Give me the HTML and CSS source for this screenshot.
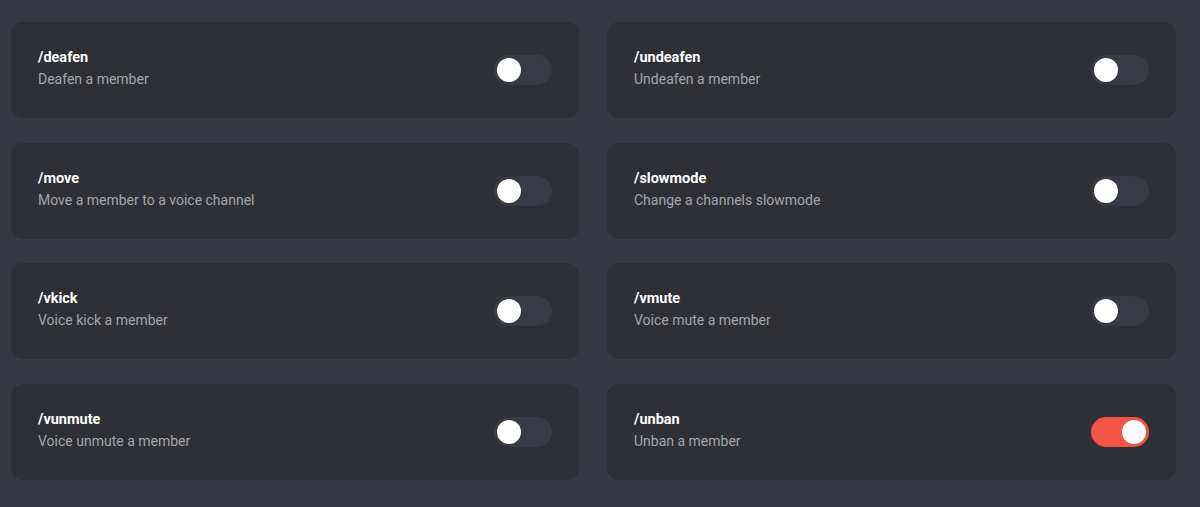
FILE: index.html
```html
<!DOCTYPE html>
<html lang="en">
<head>
<meta charset="utf-8">
<title>Commands</title>
<link rel="stylesheet" href="styles.css">
</head>
<body>
<main class="grid">
  <div class="card">
    <div class="text"><div class="title">/deafen</div><div class="desc">Deafen a member</div></div>
    <span class="toggle"><span class="knob"></span></span>
  </div>
  <div class="card">
    <div class="text"><div class="title">/undeafen</div><div class="desc">Undeafen a member</div></div>
    <span class="toggle"><span class="knob"></span></span>
  </div>
  <div class="card">
    <div class="text"><div class="title">/move</div><div class="desc">Move a member to a voice channel</div></div>
    <span class="toggle"><span class="knob"></span></span>
  </div>
  <div class="card">
    <div class="text"><div class="title">/slowmode</div><div class="desc">Change a channels slowmode</div></div>
    <span class="toggle"><span class="knob"></span></span>
  </div>
  <div class="card">
    <div class="text"><div class="title">/vkick</div><div class="desc">Voice kick a member</div></div>
    <span class="toggle"><span class="knob"></span></span>
  </div>
  <div class="card">
    <div class="text"><div class="title">/vmute</div><div class="desc">Voice mute a member</div></div>
    <span class="toggle"><span class="knob"></span></span>
  </div>
  <div class="card">
    <div class="text"><div class="title">/vunmute</div><div class="desc">Voice unmute a member</div></div>
    <span class="toggle"><span class="knob"></span></span>
  </div>
  <div class="card">
    <div class="text"><div class="title">/unban</div><div class="desc">Unban a member</div></div>
    <span class="toggle on"><span class="knob"></span></span>
  </div>
</main>
</body>
</html>
```
FILE: styles.css
```css
html, body {
  margin: 0;
  padding: 0;
  background: #363941;
  font-family: Roboto, "Liberation Sans", sans-serif;
}
.grid {
  display: grid;
  grid-template-columns: 568px 569px;
  grid-auto-rows: 96px;
  column-gap: 28px;
  row-gap: 24.67px;
  padding: 22px 0 0 11px;
}
.card {
  background: #2f3035;
  border-radius: 12px;
  display: flex;
  align-items: center;
  justify-content: space-between;
  padding: 0 27px;
}
.text {
  display: flex;
  flex-direction: column;
  padding-bottom: 2px;
}
.title {
  color: #ffffff;
  font-weight: 700;
  font-size: 14.5px;
  line-height: 20px;
}
.desc {
  color: #a3a5aa;
  font-size: 14px;
  line-height: 22px;
}
.toggle {
  width: 58px;
  height: 30px;
  border-radius: 15px;
  background: #383b43;
  display: flex;
  align-items: center;
  padding: 0 3px;
  box-sizing: border-box;
}
.knob {
  width: 24px;
  height: 24px;
  border-radius: 50%;
  background: #ffffff;
}
.toggle.on {
  background: #f15443;
  justify-content: flex-end;
}
```
